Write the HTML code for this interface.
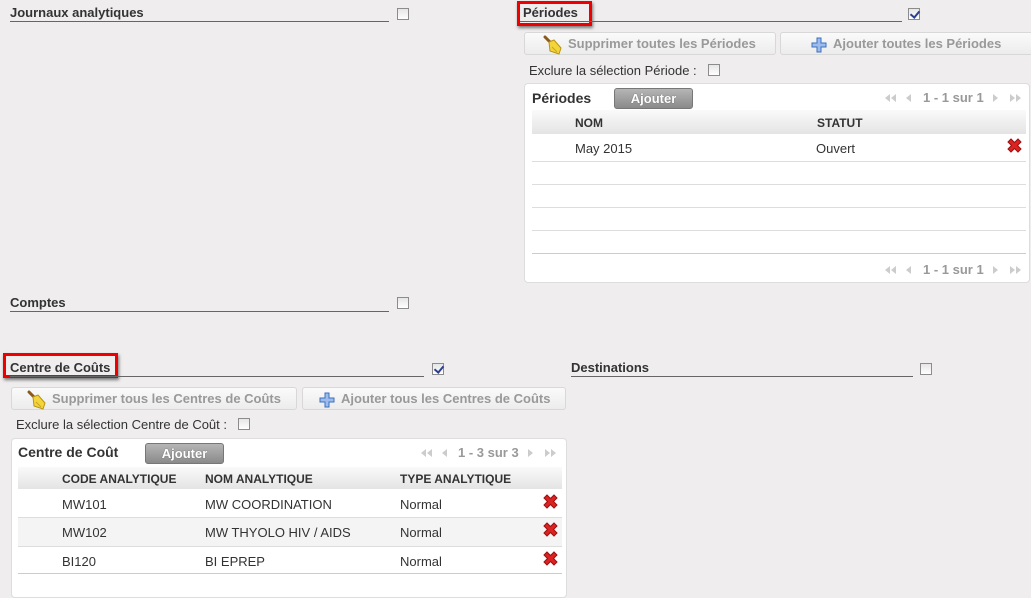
<!DOCTYPE html>
<html><head><meta charset="utf-8"><style>
*{margin:0;padding:0;box-sizing:border-box}
body{width:1031px;height:586px;background:#efeded;font-family:"Liberation Sans",Arial,sans-serif;font-size:13px;color:#333;position:relative;overflow:hidden}
.a{position:absolute}
.t{font-weight:bold;color:#333;font-size:13px;white-space:nowrap}
.ln{position:absolute;height:1px;background:#666}
.cb{position:absolute;width:12px;height:12px;border:1px solid #8c8c8c;background:linear-gradient(#e6e6e6,#fff)}
.cb.on::after{content:"";position:absolute;left:3px;top:0px;width:4px;height:7px;border:solid #2a3f8f;border-width:0 2px 2px 0;transform:rotate(40deg)}
.red{position:absolute;border:3px solid #e00;box-shadow:1px 2px 3px rgba(0,0,0,.5)}
.btn{position:absolute;height:23px;border:1px solid #d8d8d8;border-radius:3px;background:linear-gradient(#fafafa,#ececec);color:#999;font-weight:bold;font-size:13px;line-height:21px;white-space:nowrap}
.panel{position:absolute;background:#fff;border:1px solid #ddd;border-radius:4px}
.hdr{position:absolute;background:linear-gradient(#fafafa,#e4e4e4);font-weight:bold;font-size:12px;color:#333}
.aj{position:absolute;width:79px;height:21px;border:1px solid #777;border-radius:3px;background:linear-gradient(#b5b5b5,#8a8a8a);color:#fff;font-weight:bold;font-size:13px;text-align:center;line-height:19px;text-shadow:0 0 1px #555}
.pg{position:absolute;color:#999;font-weight:bold;font-size:13px;white-space:nowrap}
.rl{position:absolute;height:1px;background:#ddd}
.x{position:absolute;width:17px;height:17px}
</style></head><body>

<svg width="0" height="0" style="position:absolute"><defs>
<g id="broom"><path d="M3 2 L9 8" stroke="#8a5a1a" stroke-width="3" stroke-linecap="round"/><path d="M7 7 L12 5 L19 13 L17 19 L8 16 Z" fill="#f3d43a" stroke="#b99410" stroke-width="1"/><path d="M10 12 L15 17" stroke="#c9a520"/></g>
<g id="plus"><path d="M6 1 h4 v5 h5 v4 h-5 v5 h-4 v-5 h-5 v-4 h5 z" fill="#9bbcec" stroke="#3d6fbf" stroke-width="1"/></g>
<g id="xx"><path d="M2 5 L5 2 L8.5 5.5 L12 2 L15 5 L11.5 8.5 L15 12 L12 15 L8.5 11.5 L5 15 L2 12 L5.5 8.5 Z" fill="#d22" stroke="#911" stroke-width="1"/></g>
<g id="pl"><path d="M0 4 L5 0 L5 8 Z M6 4 L11 0 L11 8 Z" fill="#ccc"/></g>
<g id="p1"><path d="M0 4 L5 0 L5 8 Z" fill="#ccc"/></g>
<g id="n1"><path d="M5 4 L0 0 L0 8 Z" fill="#ccc"/></g>
<g id="nl"><path d="M5 4 L0 0 L0 8 Z M11 4 L6 0 L6 8 Z" fill="#ccc"/></g>
</defs></svg>

<div class="a t" style="left:10px;top:5px">Journaux analytiques</div>
<div class="ln" style="left:10px;top:21px;width:379px"></div>
<div class="cb" style="left:397px;top:8px"></div>

<div class="red" style="left:517px;top:1px;width:75px;height:25px"></div>
<div class="a t" style="left:523px;top:5px">Périodes</div>
<div class="ln" style="left:520px;top:21px;width:382px"></div>
<div class="cb on" style="left:908px;top:8px"></div>

<div class="btn" style="left:524px;top:32px;width:252px"><svg class="a" style="left:17px;top:2px" width="22" height="21"><use href="#broom"/></svg><span class="a" style="left:43px">Supprimer toutes les Périodes</span></div>
<div class="btn" style="left:780px;top:32px;width:253px"><svg class="a" style="left:30px;top:4px" width="16" height="16"><use href="#plus"/></svg><span class="a" style="left:52px">Ajouter toutes les Périodes</span></div>
<div class="a" style="left:529px;top:63px;color:#333">Exclure la sélection Période :</div>
<div class="cb" style="left:708px;top:64px"></div>

<div class="panel" style="left:524px;top:83px;width:506px;height:200px">
 <div class="a t" style="left:7px;top:6px;font-size:14px">Périodes</div>
 <div class="aj" style="left:89px;top:4px">Ajouter</div>
 <svg class="a" style="left:360px;top:10px" width="12" height="9"><use href="#pl"/></svg>
 <svg class="a" style="left:381px;top:10px" width="6" height="9"><use href="#p1"/></svg>
 <div class="pg" style="left:398px;top:6px">1 - 1 sur 1</div>
 <svg class="a" style="left:468px;top:10px" width="6" height="9"><use href="#n1"/></svg>
 <svg class="a" style="left:485px;top:10px" width="12" height="9"><use href="#nl"/></svg>
 <div class="hdr" style="left:7px;top:26px;width:494px;height:24px"><span class="a" style="left:43px;top:6px">NOM</span><span class="a" style="left:285px;top:6px">STATUT</span></div>
 <div class="a" style="left:50px;top:57px">May 2015</div>
 <div class="a" style="left:291px;top:57px">Ouvert</div>
 <svg class="x" style="left:481px;top:53px"><use href="#xx"/></svg>
 <div class="rl" style="left:7px;top:77px;width:494px"></div>
 <div class="rl" style="left:7px;top:100px;width:494px"></div>
 <div class="rl" style="left:7px;top:123px;width:494px"></div>
 <div class="rl" style="left:7px;top:146px;width:494px"></div>
 <div class="rl" style="left:7px;top:169px;width:494px;background:#ccc"></div>
 <svg class="a" style="left:360px;top:182px" width="12" height="9"><use href="#pl"/></svg>
 <svg class="a" style="left:381px;top:182px" width="6" height="9"><use href="#p1"/></svg>
 <div class="pg" style="left:398px;top:178px">1 - 1 sur 1</div>
 <svg class="a" style="left:468px;top:182px" width="6" height="9"><use href="#n1"/></svg>
 <svg class="a" style="left:485px;top:182px" width="12" height="9"><use href="#nl"/></svg>
</div>

<div class="a t" style="left:10px;top:295px">Comptes</div>
<div class="ln" style="left:10px;top:311px;width:379px"></div>
<div class="cb" style="left:397px;top:297px"></div>

<div class="red" style="left:3px;top:353px;width:115px;height:25px"></div>
<div class="a t" style="left:10px;top:360px">Centre de Coûts</div>
<div class="ln" style="left:10px;top:376px;width:414px"></div>
<div class="cb on" style="left:432px;top:363px"></div>

<div class="a t" style="left:571px;top:360px">Destinations</div>
<div class="ln" style="left:571px;top:376px;width:342px"></div>
<div class="cb" style="left:920px;top:363px"></div>

<div class="btn" style="left:11px;top:387px;width:286px"><svg class="a" style="left:14px;top:2px" width="22" height="21"><use href="#broom"/></svg><span class="a" style="left:40px">Supprimer tous les Centres de Coûts</span></div>
<div class="btn" style="left:302px;top:387px;width:264px"><svg class="a" style="left:16px;top:4px" width="16" height="16"><use href="#plus"/></svg><span class="a" style="left:38px">Ajouter tous les Centres de Coûts</span></div>
<div class="a" style="left:16px;top:417px;color:#333">Exclure la sélection Centre de Coût :</div>
<div class="cb" style="left:238px;top:418px"></div>

<div class="panel" style="left:11px;top:438px;width:556px;height:160px">
 <div class="a t" style="left:6px;top:5px;font-size:14px">Centre de Coût</div>
 <div class="aj" style="left:133px;top:4px">Ajouter</div>
 <svg class="a" style="left:409px;top:10px" width="12" height="9"><use href="#pl"/></svg>
 <svg class="a" style="left:430px;top:10px" width="6" height="9"><use href="#p1"/></svg>
 <div class="pg" style="left:446px;top:6px">1 - 3 sur 3</div>
 <svg class="a" style="left:516px;top:10px" width="6" height="9"><use href="#n1"/></svg>
 <svg class="a" style="left:533px;top:10px" width="12" height="9"><use href="#nl"/></svg>
 <div class="hdr" style="left:6px;top:28px;width:544px;height:22px"><span class="a" style="left:44px;top:5px">CODE ANALYTIQUE</span><span class="a" style="left:187px;top:5px">NOM ANALYTIQUE</span><span class="a" style="left:382px;top:5px">TYPE ANALYTIQUE</span></div>
 <div class="a" style="left:6px;top:79px;width:544px;height:28px;background:#f4f4f4"></div>
 <div class="a" style="left:50px;top:58px">MW101</div><div class="a" style="left:193px;top:58px">MW COORDINATION</div><div class="a" style="left:388px;top:58px">Normal</div>
 <svg class="x" style="left:530px;top:54px"><use href="#xx"/></svg>
 <div class="rl" style="left:6px;top:78px;width:544px"></div>
 <div class="a" style="left:50px;top:86px">MW102</div><div class="a" style="left:193px;top:86px">MW THYOLO HIV / AIDS</div><div class="a" style="left:388px;top:86px">Normal</div>
 <svg class="x" style="left:530px;top:82px"><use href="#xx"/></svg>
 <div class="rl" style="left:6px;top:107px;width:544px"></div>
 <div class="a" style="left:50px;top:115px">BI120</div><div class="a" style="left:193px;top:115px">BI EPREP</div><div class="a" style="left:388px;top:115px">Normal</div>
 <svg class="x" style="left:530px;top:111px"><use href="#xx"/></svg>
 <div class="rl" style="left:6px;top:134px;width:544px;background:#ccc"></div>
</div>
</body></html>
